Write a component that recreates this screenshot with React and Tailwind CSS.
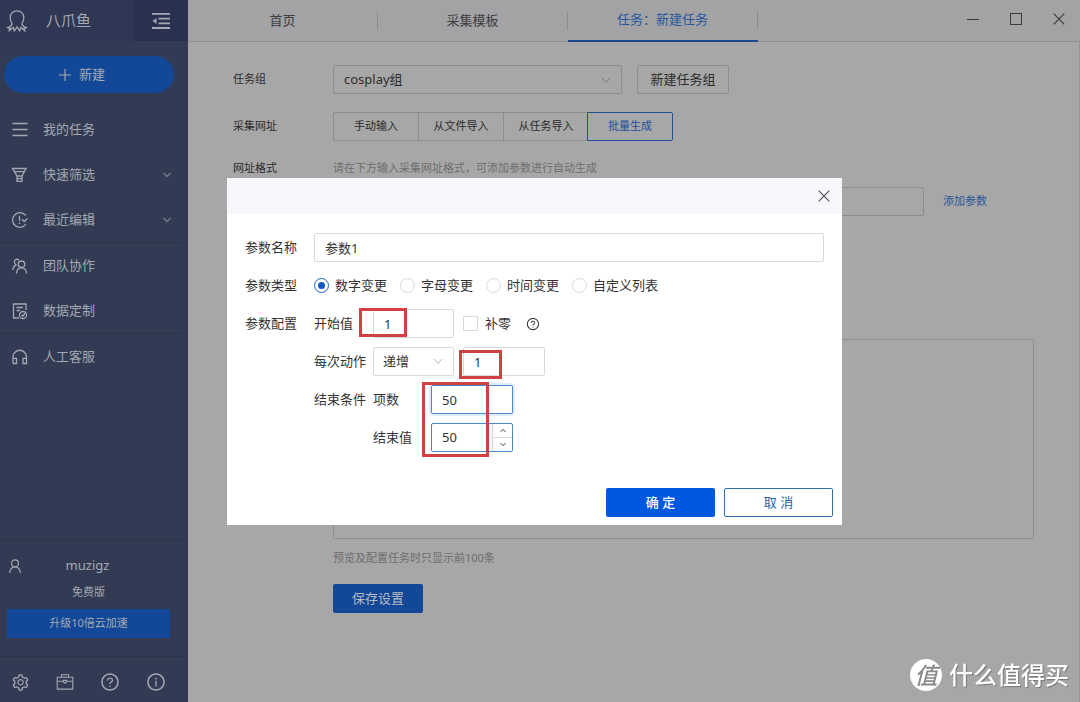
import { useState } from "react";
import { AiOutlineInfoCircle, AiOutlineQuestionCircle, AiOutlineSetting } from "react-icons/ai";

function Icon({ size = 18, width = 1.3, className = "", children }) {
  return (
    <svg
      width={size}
      height={size}
      viewBox="0 0 18 18"
      fill="none"
      stroke="currentColor"
      strokeWidth={width}
      className={`shrink-0 ${className}`}
      aria-hidden="true"
    >
      {children}
    </svg>
  );
}

const OctopusIcon = () => (
  <svg width="22" height="24" viewBox="0 0 22 24" fill="none" stroke="currentColor" strokeWidth="1.3" strokeLinejoin="round" aria-hidden="true">
    <path d="M6.200 14.500C4.800 12.700 4.200 10.800 4.200 8.500C4.200 4.500 7.200 1.800 11 1.800s6.800 2.700 6.800 6.700c0 2.300-.6 4.200-2 6" />
    <path d="M6.200 14.500C5.800 16.500 4 18.200 1.200 18.700L4.300 19.500L2.900 22L7.400 18.300L8.300 22L11 17.800L13.700 22L14.600 18.300L19.100 22L17.700 19.500L20.800 18.700C18 18.200 16.200 16.500 15.800 14.500" />
  </svg>
);

const FoldIcon = () => (
  <svg width="20" height="18" viewBox="0 0 20 18" fill="none" stroke="currentColor" strokeWidth="1.8" aria-hidden="true">
    <path d="M1 1.900h18M7.500 6.600H19M7.500 11.300H19M1 16h18" />
    <path d="M5.500 6v6L1.500 9z" fill="currentColor" stroke="none" />
  </svg>
);

const ListIcon = () => (
  <Icon width={1.5}>
    <path d="M1.500 2.500h15M1.500 8.500h15M1.500 14.500h15" />
  </Icon>
);

const FilterIcon = () => (
  <Icon>
    <path d="M1.500 2.500h13.500L11 10H6zM3.400 5.700h9.900M6 10v5.300h5V10M6 12.600h5" />
  </Icon>
);

const RecentIcon = () => (
  <Icon>
    <path d="M14.800 4.700A7.300 7.300 0 1 0 15 13M8.500 4.800v5.200M8.500 11.500v1.600M11 8.300l2.200 2.300 3.300-3" />
  </Icon>
);

const TeamIcon = () => (
  <Icon>
    <circle cx="10.500" cy="7.200" r="3.200" />
    <path d="M5.500 16.500c.2-3.400 2.200-5.600 5-5.600s4.800 2.200 5.100 5.600M8 3.200C5.800 1.200 3 2.600 3.400 5.300c.1 1.200.7 2 1.600 2.600C3 8.900 2 10.700 1.800 13" />
  </Icon>
);

const CustomIcon = () => (
  <Icon>
    <path d="M15 8V2H2.500v14H8M5.500 5.500h6.500M5.500 8.500h3.500" />
    <circle cx="12" cy="13" r="3.500" />
    <path d="M10.500 13l1.200 1.200 2.200-2.700" />
  </Icon>
);

const HeadsetIcon = () => (
  <Icon>
    <path d="M2 15.500V9a6.700 6.700 0 0 1 13.500 0v6.500h-3.500v-5.200h3.500M2 10.300h3.500v5.200H2" />
  </Icon>
);

const UserIcon = () => (
  <Icon size={16}>
    <circle cx="9" cy="6" r="3.900" />
    <path d="M3 16.800c.3-4.300 2.600-6.900 6-6.900s5.700 2.600 6 6.900" />
  </Icon>
);

const ToolboxIcon = () => (
  <Icon width={1.1}>
    <path d="M1.200 4.200h15.600v11.900H1.200zM5.500 4.200V1.800h7v2.400M1.200 8.200h6.200M10.600 8.200h6.200M7.400 7.400h3.200v1.500L9 10.300 7.400 8.900z" />
  </Icon>
);

function Chevron({ className = "" }) {
  return (
    <svg width="10" height="10" viewBox="0 0 10 10" fill="none" stroke="currentColor" className={className} aria-hidden="true">
      <path d="M1 3l4 4.500L9 3" />
    </svg>
  );
}

function CloseIcon() {
  return (
    <svg width="12" height="12" viewBox="0 0 12 12" stroke="currentColor" strokeWidth="1.2" aria-hidden="true">
      <path d="M.7.7l10.600 10.600M11.300.7L.7 11.300" />
    </svg>
  );
}

const navGroups = [
  [
    { label: "我的任务", Glyph: ListIcon },
    { label: "快速筛选", Glyph: FilterIcon, expandable: true },
    { label: "最近编辑", Glyph: RecentIcon, expandable: true },
  ],
  [
    { label: "团队协作", Glyph: TeamIcon },
    { label: "数据定制", Glyph: CustomIcon },
  ],
  [{ label: "人工客服", Glyph: HeadsetIcon }],
];

const tabs = ["首页", "采集模板", "任务：新建任务"];
const sources = ["手动输入", "从文件导入", "从任务导入", "批量生成"];
const paramTypes = ["数字变更", "字母变更", "时间变更", "自定义列表"];

function Sidebar() {
  return (
    <aside className="flex w-[188px] shrink-0 flex-col bg-[#323b53] text-[#a5a8b1]">
      <div className="flex h-[41px] items-center bg-[#2f3754]">
        <div className="flex flex-1 items-center gap-[18px] pl-[6px]">
          <OctopusIcon />
          <span className="text-[15px]">八爪鱼</span>
        </div>
        <button aria-label="收起" className="flex h-full w-[54px] items-center justify-center bg-[#2a3150]">
          <FoldIcon />
        </button>
      </div>

      <div className="pt-[15px] pr-[14px] pb-[14px] pl-1">
        <button className="flex h-[37px] w-full items-center justify-center gap-2 rounded-full bg-[#124897] pr-[14px] text-[13px]">
          <svg width="12" height="12" viewBox="0 0 12 12" stroke="currentColor" strokeWidth="1.2" aria-hidden="true">
            <path d="M6 0v12M0 6h12" />
          </svg>
          新建
        </button>
      </div>

      <nav>
        {navGroups.map((group, i) => (
          <div key={i} className={i > 0 ? "mr-[6px] border-t border-[#2b3349]" : "mr-[6px]"}>
            {group.map(({ label, Glyph, expandable }) => (
              <button key={label} className="flex h-[45px] w-full items-center gap-[14px] pr-[10px] pl-[11px] text-[13px]">
                <Glyph />
                {label}
                {expandable && (
                  <svg width="10" height="8" viewBox="0 0 10 8" fill="none" stroke="currentColor" strokeWidth="1.5" className="ml-auto text-[#737989]" aria-hidden="true">
                    <path d="M1.500 2L5 5.500 8.500 2" />
                  </svg>
                )}
              </button>
            ))}
          </div>
        ))}
      </nav>

      <div className="mt-auto">
        <div className="mr-[6px] border-t border-[#2b3349]" />
        <div className="flex h-[40px] items-center pt-[10px] pr-[18px] pl-[7px]">
          <UserIcon />
          <span className="flex-1 pr-[18px] text-center text-[13px]">muzigz</span>
        </div>
        <div className="h-[28px] pr-[11px] text-center text-[11px] leading-[22px]">免费版</div>
        <div className="pr-[18px] pl-[7px]">
          <button className="h-[29px] w-full bg-[#124897] text-[11px]">升级10倍云加速</button>
        </div>
        <div className="mt-[18px] mr-[6px] border-t border-[#2b3349]" />
        <div className="flex h-[45px] items-center justify-between pt-[5px] pr-[22px] pl-[11px]">
          <button aria-label="设置"><AiOutlineSetting size={19} /></button>
          <button aria-label="工具箱"><ToolboxIcon /></button>
          <button aria-label="帮助"><AiOutlineQuestionCircle size={20} /></button>
          <button aria-label="关于"><AiOutlineInfoCircle size={20} /></button>
        </div>
      </div>
    </aside>
  );
}

function TopBar() {
  return (
    <header className="flex h-[42px] shrink-0 border-b border-[#929295] bg-[#a3a3a5] text-[13px] text-[#3c3c3e]">
      {tabs.map((tab, i) => (
        <button
          key={tab}
          className={
            i === 2
              ? "-mb-px flex w-[190px] items-center border-b-2 border-[#1c478c] text-[#27579b]"
              : "flex w-[190px] items-center"
          }
        >
          <span className="flex h-[18px] flex-1 items-center justify-center border-r border-[#8c8c8e]">{tab}</span>
        </button>
      ))}
      <div className="ml-auto flex items-center gap-[31px] pr-[15px] pb-[3px]">
        <button aria-label="最小化" className="h-3 w-3">
          <span className="block h-px bg-[#3c3c3e]" />
        </button>
        <button aria-label="最大化" className="h-3 w-3 border border-[#3c3c3e]" />
        <button aria-label="关闭窗口"><CloseIcon /></button>
      </div>
    </header>
  );
}

function TaskForm() {
  const [source, setSource] = useState("批量生成");

  return (
    <main className="flex-1 border-r border-[#959595] pt-[23px] pr-[45px] pl-[45px] text-[11px] text-[#2b2b2b]">
      <div className="flex h-[29px] items-center">
        <label htmlFor="group" className="w-[100px] shrink-0">任务组</label>
        <div className="relative h-full w-[289px]">
          <select id="group" className="h-full w-full appearance-none rounded-xs border border-[#8d8d8d] bg-transparent px-[10px] text-[13px]">
            <option>cosplay组</option>
          </select>
          <Chevron className="pointer-events-none absolute top-[10px] right-[11px] text-[#757575]" />
        </div>
        <button className="ml-[15px] h-full w-[92px] rounded-xs border border-[#8d8d8d] text-[13px]">新建任务组</button>
      </div>

      <div className="mt-[18px] flex h-[29px] items-center">
        <span className="w-[100px] shrink-0">采集网址</span>
        {sources.map((item) => (
          <button
            key={item}
            onClick={() => setSource(item)}
            className={
              source === item
                ? "-ml-px h-full w-[86px] rounded-r-xs border border-[#24509a] text-[#24509a]"
                : "h-full w-[85px] border border-r-0 border-[#8d8d8d] first-of-type:rounded-l-xs"
            }
          >
            {item}
          </button>
        ))}
      </div>

      <div className="mt-[18px] flex h-[18px] items-center">
        <label htmlFor="format" className="w-[100px] shrink-0">网址格式</label>
        <span className="text-[#6e6e6e]">请在下方输入采集网址格式，可添加参数进行自动生成</span>
      </div>
      <div className="mt-[10px] flex h-[29px] items-center pl-[100px]">
        <input id="format" className="h-full min-w-0 flex-1 rounded-xs border border-[#8d8d8d] px-[10px]" />
        <a href="#param" className="w-[110px] pl-[19px] text-[#27579b]">添加参数</a>
      </div>

      <div className="mt-[123px] pl-[100px]">
        <textarea aria-label="网址预览" className="block h-[200px] w-full resize-none rounded-xs border border-[#8d8d8d]" />
        <p className="mt-[10px] leading-[18px] text-[#6e6e6e]">预览及配置任务时只显示前100条</p>
        <button className="mt-[17px] h-[29px] w-[90px] rounded-xs bg-[#124897] text-[13px] text-[#b4bac4]">保存设置</button>
      </div>
    </main>
  );
}

function ParamDialog() {
  const [type, setType] = useState("数字变更");

  return (
    <div className="fixed inset-0 flex items-center justify-center pt-px pr-[11px]">
      <div role="dialog" className="relative w-[615px] bg-white text-[13px] text-[#333]">
        <div className="flex h-[36px] items-center justify-end bg-[#f5f7fa] pr-3">
          <button aria-label="关闭" className="text-[#555]"><CloseIcon /></button>
        </div>

        <div className="flex flex-col gap-[9px] pt-[19px] pr-[18px] pl-[18px]">
          <div className="flex h-[29px] items-center">
            <label htmlFor="name" className="w-[69px]">参数名称</label>
            <input id="name" defaultValue="参数1" className="h-full flex-1 rounded-xs border border-[#d9d9d9] px-[10px]" />
          </div>

          <div className="flex h-[29px] items-center">
            <span className="w-[69px]">参数类型</span>
            <div className="flex gap-[13px]">
              {paramTypes.map((item) => (
                <label key={item} className="flex items-center gap-[6px]">
                  <input
                    type="radio"
                    name="type"
                    checked={type === item}
                    onChange={() => setType(item)}
                    className="h-[15px] w-[15px] appearance-none rounded-full border border-[#d9d9d9] bg-white checked:border-[#1f5fb8] checked:bg-[#1257c4] checked:bg-clip-content checked:p-[3px]"
                  />
                  {item}
                </label>
              ))}
            </div>
          </div>

          <div className="flex h-[29px] items-center">
            <span className="w-[69px]">参数配置</span>
            <label htmlFor="start" className="w-[59px]">开始值</label>
            <input id="start" defaultValue="1" className="h-full w-[81px] rounded-xs border border-[#d9d9d9] px-[10px]" />
            <label className="ml-[9px] flex items-center gap-[7px]">
              <input type="checkbox" className="h-[15px] w-[15px] appearance-none border border-[#d9d9d9]" />
              补零
            </label>
            <AiOutlineQuestionCircle size={14} className="ml-[15px]" />
          </div>

          <div className="flex h-[29px] items-center pl-[69px]">
            <label htmlFor="action" className="w-[59px]">每次动作</label>
            <div className="relative h-full w-[81px]">
              <select id="action" className="h-full w-full appearance-none rounded-xs border border-[#d9d9d9] px-[9px]">
                <option>递增</option>
                <option>递减</option>
              </select>
              <Chevron className="pointer-events-none absolute top-[9px] right-[11px] text-[#b5b5b5]" />
            </div>
            <input aria-label="步长" defaultValue="1" className="ml-[9px] h-full w-[82px] rounded-xs border border-[#d9d9d9] px-[10px]" />
          </div>

          <div className="flex h-[29px] items-center pl-[69px]">
            <span className="w-[59px]">结束条件</span>
            <label htmlFor="count" className="w-[58px]">项数</label>
            <input id="count" defaultValue="50" className="h-full w-[82px] rounded-xs border border-[#4a86cc] px-[10px] shadow-[0_0_0_2px_#e0ecfa]" />
          </div>

          <div className="flex h-[29px] items-center pl-[128px]">
            <label htmlFor="end" className="w-[58px]">结束值</label>
            <div className="flex h-full w-[82px] rounded-xs border border-[#4a86cc]">
              <input id="end" defaultValue="50" className="min-w-0 flex-1 px-[10px]" />
              <div className="flex w-[20px] flex-col border-l border-[#d9d9d9] text-[#555]">
                <button aria-label="增加" className="flex flex-1 items-center justify-center">
                  <svg width="6" height="5" viewBox="0 0 6 5" fill="none" stroke="currentColor"><path d="M.5 4L3 1.200 5.500 4" /></svg>
                </button>
                <button aria-label="减少" className="flex flex-1 items-center justify-center border-t border-[#d9d9d9]">
                  <svg width="6" height="5" viewBox="0 0 6 5" fill="none" stroke="currentColor"><path d="M.5 1L3 3.800 5.500 1" /></svg>
                </button>
              </div>
            </div>
          </div>
        </div>

        <div className="mt-[36px] flex justify-end gap-[9px] pr-[9px] pb-2">
          <button className="h-[29px] w-[109px] rounded-xs bg-[#0058df] font-medium text-white">确 定</button>
          <button className="h-[29px] w-[109px] rounded-xs border border-[#3570a8] text-[#2467a8]">取 消</button>
        </div>

        {/* highlight frames over the values to fill in */}
        <div className="pointer-events-none absolute top-[130px] left-[132px] h-[29px] w-[48px] border-3 border-[#cf4143]" />
        <div className="pointer-events-none absolute top-[172px] left-[232px] h-[29px] w-[43px] border-3 border-[#cf4143]" />
        <div className="pointer-events-none absolute top-[204px] left-[195px] h-[75px] w-[67px] border-3 border-[#cf4143]" />
      </div>
    </div>
  );
}

function Watermark() {
  return (
    <div className="pointer-events-none fixed right-[11px] bottom-[11px] flex items-center gap-[7px] text-white">
      <span className="flex h-[32px] w-[32px] items-center justify-center rounded-full bg-white text-[23px] leading-[32px] font-medium text-[#8a8a8a] italic">
        值
      </span>
      <span className="text-[24px] leading-[32px] font-medium [text-shadow:1px_1px_1px_#777]">什么值得买</span>
    </div>
  );
}

export default function App() {
  return (
    <div className="flex min-h-screen bg-[#a7a7a7] font-['Noto_Sans','Noto_Sans_CJK_SC',sans-serif]">
      <Sidebar />
      <div className="flex min-w-0 flex-1 flex-col">
        <TopBar />
        <TaskForm />
      </div>
      <ParamDialog />
      <Watermark />
    </div>
  );
}
